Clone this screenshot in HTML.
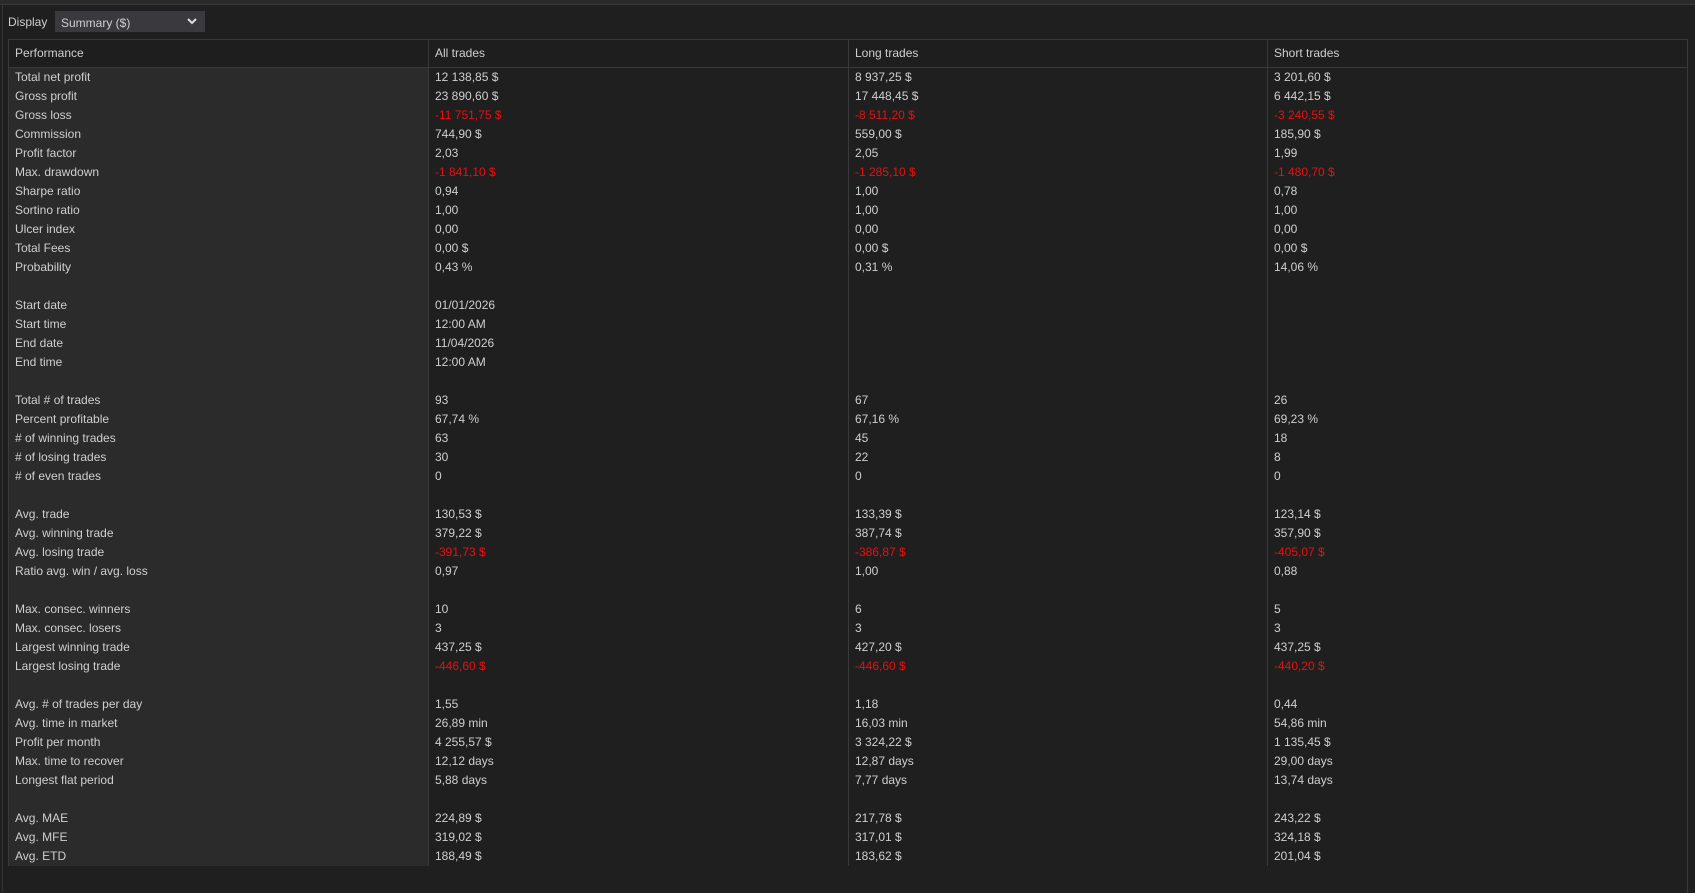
<!DOCTYPE html><html><head><style>
body{margin:0;width:1695px;height:893px;background:#1f1f1f;font-family:"Liberation Sans",sans-serif;font-size:12px;color:#cfcfcf;overflow:hidden;position:relative}
.top{position:absolute;left:0;top:0;width:1695px;height:4px;background:#2a2a2a;border-bottom:1px solid #3a3a3a}
.lb{position:absolute;left:2px;top:5px;width:1px;height:888px;background:#333}
.disp{position:absolute;left:8px;top:15px}
.dd{position:absolute;left:55px;top:11px;width:150px;height:21px;background:#3a3a3e;box-sizing:border-box;padding:5px 0 0 6px}
.dd svg{position:absolute;right:8px;top:7px}
table{position:absolute;left:8px;top:39px;width:1680px;border-collapse:collapse;table-layout:fixed;border:1px solid #3a3a3a;border-bottom:none}
td,th{padding:0 0 0 6px;height:19px;line-height:19px;text-align:left;font-weight:normal;white-space:nowrap}
th{height:27px;border-bottom:1px solid #3a3a3a;border-left:1px solid #3a3a3a;background:#1e1e1e}
td{border-left:1px solid #3a3a3a}
td:first-child{background:#2b2b2b}
.r{color:#e81010}
</style></head><body>
<div class="top"></div><div class="lb"></div>
<div class="disp">Display</div>
<div class="dd">Summary ($)<svg width="10" height="7"><path d="M1 1l4 4 4-4" stroke="#ddd" stroke-width="2" fill="none"/></svg></div>
<table>
<colgroup><col style="width:420px"><col style="width:420px"><col style="width:419px"><col></colgroup>
<tr><th>Performance</th><th>All trades</th><th>Long trades</th><th>Short trades</th></tr>
<tr><td>Total net profit</td><td>12 138,85 $</td><td>8 937,25 $</td><td>3 201,60 $</td></tr>
<tr><td>Gross profit</td><td>23 890,60 $</td><td>17 448,45 $</td><td>6 442,15 $</td></tr>
<tr><td>Gross loss</td><td class="r">-11 751,75 $</td><td class="r">-8 511,20 $</td><td class="r">-3 240,55 $</td></tr>
<tr><td>Commission</td><td>744,90 $</td><td>559,00 $</td><td>185,90 $</td></tr>
<tr><td>Profit factor</td><td>2,03</td><td>2,05</td><td>1,99</td></tr>
<tr><td>Max. drawdown</td><td class="r">-1 841,10 $</td><td class="r">-1 285,10 $</td><td class="r">-1 480,70 $</td></tr>
<tr><td>Sharpe ratio</td><td>0,94</td><td>1,00</td><td>0,78</td></tr>
<tr><td>Sortino ratio</td><td>1,00</td><td>1,00</td><td>1,00</td></tr>
<tr><td>Ulcer index</td><td>0,00</td><td>0,00</td><td>0,00</td></tr>
<tr><td>Total Fees</td><td>0,00 $</td><td>0,00 $</td><td>0,00 $</td></tr>
<tr><td>Probability</td><td>0,43 %</td><td>0,31 %</td><td>14,06 %</td></tr>
<tr><td></td><td></td><td></td><td></td></tr>
<tr><td>Start date</td><td>01/01/2026</td><td></td><td></td></tr>
<tr><td>Start time</td><td>12:00 AM</td><td></td><td></td></tr>
<tr><td>End date</td><td>11/04/2026</td><td></td><td></td></tr>
<tr><td>End time</td><td>12:00 AM</td><td></td><td></td></tr>
<tr><td></td><td></td><td></td><td></td></tr>
<tr><td>Total # of trades</td><td>93</td><td>67</td><td>26</td></tr>
<tr><td>Percent profitable</td><td>67,74 %</td><td>67,16 %</td><td>69,23 %</td></tr>
<tr><td># of winning trades</td><td>63</td><td>45</td><td>18</td></tr>
<tr><td># of losing trades</td><td>30</td><td>22</td><td>8</td></tr>
<tr><td># of even trades</td><td>0</td><td>0</td><td>0</td></tr>
<tr><td></td><td></td><td></td><td></td></tr>
<tr><td>Avg. trade</td><td>130,53 $</td><td>133,39 $</td><td>123,14 $</td></tr>
<tr><td>Avg. winning trade</td><td>379,22 $</td><td>387,74 $</td><td>357,90 $</td></tr>
<tr><td>Avg. losing trade</td><td class="r">-391,73 $</td><td class="r">-386,87 $</td><td class="r">-405,07 $</td></tr>
<tr><td>Ratio avg. win / avg. loss</td><td>0,97</td><td>1,00</td><td>0,88</td></tr>
<tr><td></td><td></td><td></td><td></td></tr>
<tr><td>Max. consec. winners</td><td>10</td><td>6</td><td>5</td></tr>
<tr><td>Max. consec. losers</td><td>3</td><td>3</td><td>3</td></tr>
<tr><td>Largest winning trade</td><td>437,25 $</td><td>427,20 $</td><td>437,25 $</td></tr>
<tr><td>Largest losing trade</td><td class="r">-446,60 $</td><td class="r">-446,60 $</td><td class="r">-440,20 $</td></tr>
<tr><td></td><td></td><td></td><td></td></tr>
<tr><td>Avg. # of trades per day</td><td>1,55</td><td>1,18</td><td>0,44</td></tr>
<tr><td>Avg. time in market</td><td>26,89 min</td><td>16,03 min</td><td>54,86 min</td></tr>
<tr><td>Profit per month</td><td>4 255,57 $</td><td>3 324,22 $</td><td>1 135,45 $</td></tr>
<tr><td>Max. time to recover</td><td>12,12 days</td><td>12,87 days</td><td>29,00 days</td></tr>
<tr><td>Longest flat period</td><td>5,88 days</td><td>7,77 days</td><td>13,74 days</td></tr>
<tr><td></td><td></td><td></td><td></td></tr>
<tr><td>Avg. MAE</td><td>224,89 $</td><td>217,78 $</td><td>243,22 $</td></tr>
<tr><td>Avg. MFE</td><td>319,02 $</td><td>317,01 $</td><td>324,18 $</td></tr>
<tr><td>Avg. ETD</td><td>188,49 $</td><td>183,62 $</td><td>201,04 $</td></tr>
</table>
<div style="position:absolute;left:1687px;top:39px;width:1px;height:854px;background:#3a3a3a"></div>
</body></html>
